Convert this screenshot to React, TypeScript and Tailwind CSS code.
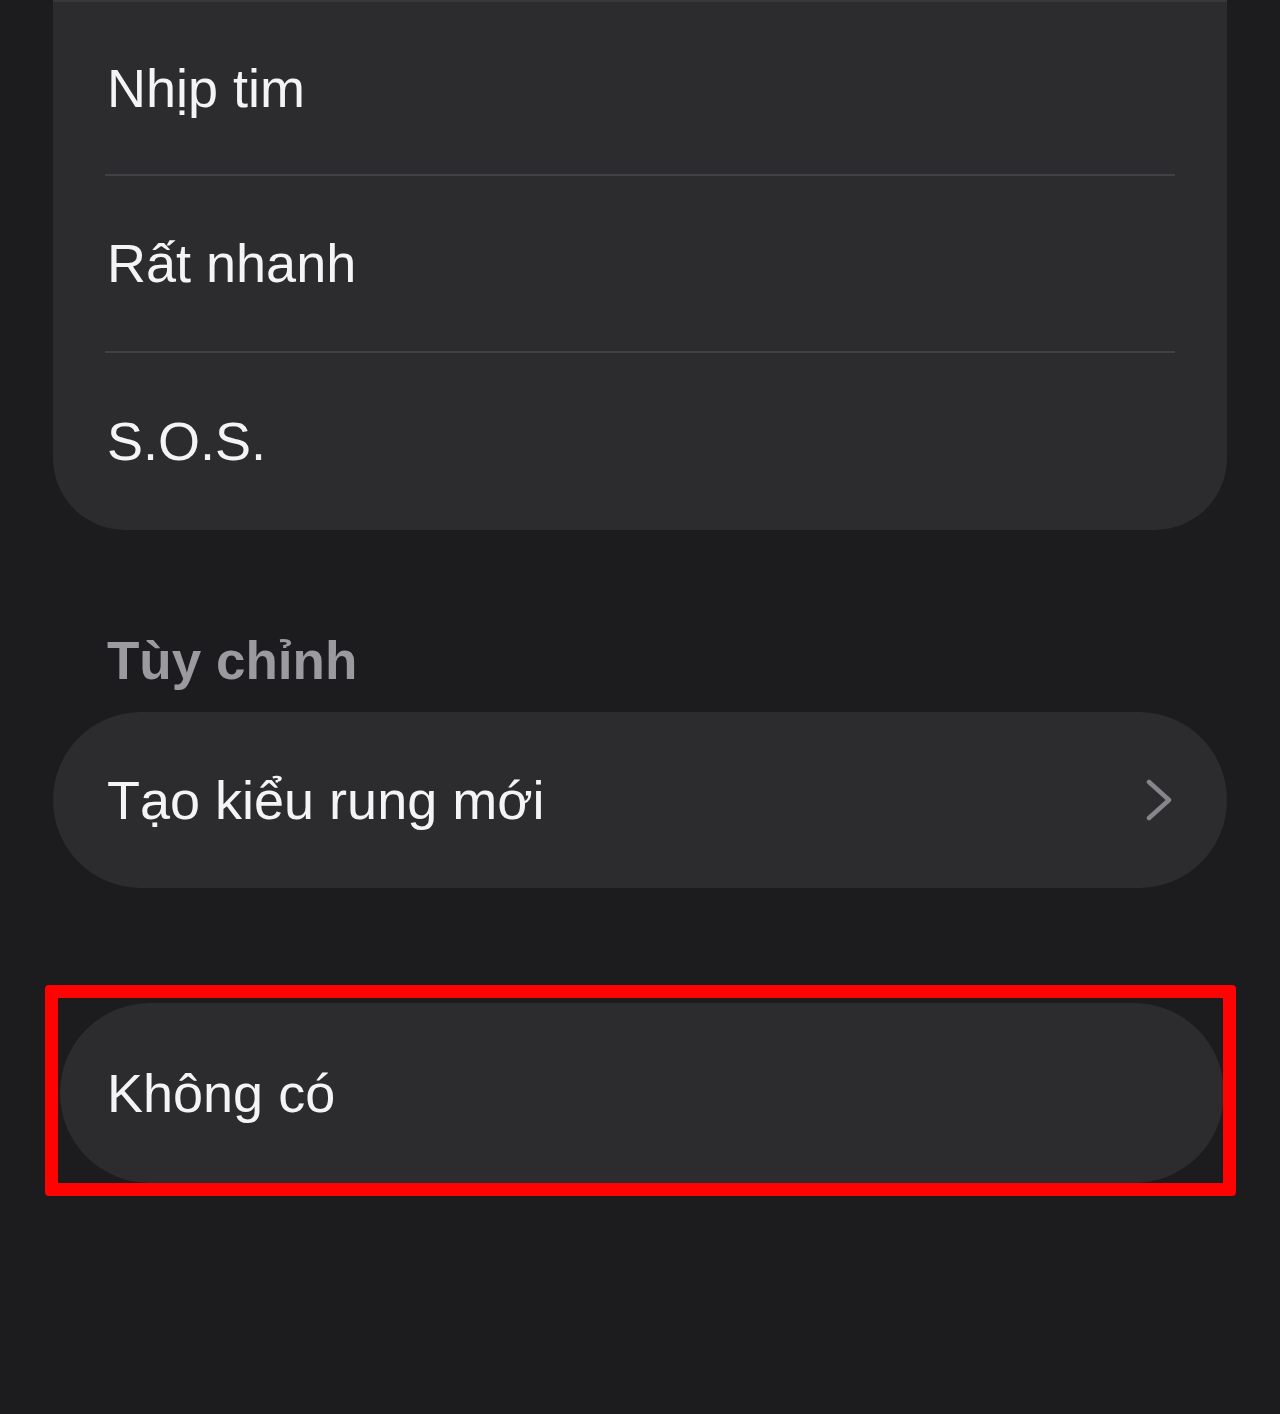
import React from 'react';

const font = { fontFamily: '"Liberation Sans", Arial, sans-serif' };

const Chevron = () => (
  <svg width="30" height="42" viewBox="0 0 30 42" fill="none" className="shrink-0">
    <path d="M4 3 L24 21 L4 39" stroke="#85858a" strokeWidth="4.5" strokeLinecap="round" strokeLinejoin="round" />
  </svg>
);

export default function App() {
  const rows = [
    { label: 'Nhịp tim', h: 'h-[172px]' },
    { label: 'Rất nhanh', h: 'h-[175px]' },
    { label: 'S.O.S.', h: 'h-[177px]' },
  ];

  return (
    <div className="w-[1280px] h-[1414px] bg-[#1c1c1e] overflow-hidden text-[#f4f4f5]" style={font}>
      {/* Vibration pattern list */}
      <div className="mx-[53px] bg-[#2c2c2e] rounded-b-[72px] border-t-2 border-[#38383a]">
        {rows.map((r, i) => (
          <div key={r.label}>
            {i > 0 && <div className="mx-[52px] h-[2px] bg-[#404045]" />}
            <div className={`flex items-center px-[54px] text-[54px] ${r.h}`}>{r.label}</div>
          </div>
        ))}
      </div>

      {/* Custom section */}
      <div className="mt-[103px] mb-[24px] px-[107px] text-[53px] leading-[55px] font-bold text-[#9a9a9f]">
        Tùy chỉnh
      </div>
      <div className="mx-[53px] h-[176px] bg-[#2c2c2e] rounded-[88px] flex items-center justify-between pl-[54px] pr-[52px] text-[54px]">
        <span>Tạo kiểu rung mới</span>
        <Chevron />
      </div>

      {/* None option, highlighted */}
      <div className="relative ml-[45px] mr-[44px] mt-[97px] h-[211px] pt-[18px] pl-[15px] pr-[12px]">
        <div className="h-[180px] bg-[#2c2c2e] rounded-[90px] flex items-center pl-[47px] text-[54px]">
          Không có
        </div>
        <div className="absolute inset-0 border-[13px] border-[#ff0202] rounded-[4px]" />
      </div>
    </div>
  );
}
